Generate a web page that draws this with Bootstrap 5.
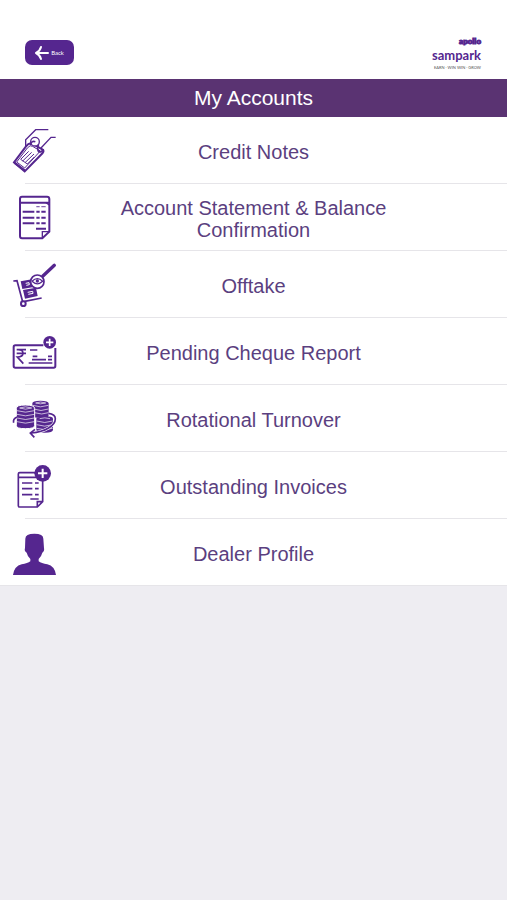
<!DOCTYPE html>
<html lang="en">
<head>
<meta charset="utf-8">
<meta name="viewport" content="width=device-width, initial-scale=1">
<title>My Accounts</title>
<link rel="stylesheet" href="https://cdn.jsdelivr.net/npm/bootstrap@5.3.0/dist/css/bootstrap.min.css">
<style>
  :root { --brand: #55268f; --bar: #5a3372; --ink: #5b3f80; }
  body { background: #eeedf2; font-family: "Liberation Sans", Arial, sans-serif; }
  .top-bar { height: 79px; padding: 32px 26px 0 25px; }
  .back-btn { width: 49px; height: 25px; border-radius: 7px; background: var(--brand); color: #fff; border: 0;
    font: 6px/25px Lato, "Liberation Sans", sans-serif; gap: 2px; }
  .brand-logo { color: var(--brand); font-family: Lato, "Liberation Sans", sans-serif; }
  .logo-top { font-size: 8px; line-height: 10px; font-weight: 900; padding-top: 4px; -webkit-text-stroke: 1px var(--brand); }
  .logo-main { font-size: 13px; line-height: 18px; font-weight: 700; }
  .logo-tag { font-size: 4px; line-height: 8px; color: #555; }
  .title-bar { background: var(--bar); font-size: 21px; line-height: 38px; }
  .menu-list { border-bottom: 1px solid #e6e5e9; }
  .menu-row { display: grid; grid-template-columns: 100px 1fr 100px; height: 66px; align-items: center;
    color: var(--ink); font-size: 20px; line-height: 22px; }
  .menu-label { padding-top: 3px; }
  .menu-item + .menu-item::before { content: ""; display: block; height: 1px; margin-left: 25px; background: #e6e5e9; }
  .menu-row svg { width: 60px; height: 66px; fill: none; stroke: var(--brand); stroke-width: 6; }
  .menu-row .solid { fill: var(--brand); }
  .menu-row .paper { fill: #fff; }
</style>
<script src="https://cdn.jsdelivr.net/npm/bootstrap@5.3.0/dist/js/bootstrap.bundle.min.js"></script>
</head>
<body>
<header>
  <div class="top-bar bg-white d-flex justify-content-between align-items-start">
    <button type="button" class="back-btn d-flex align-items-center justify-content-center p-0 mt-2">
      <svg width="14" height="16" viewBox="0 0 14 16" fill="none" stroke="#fff" stroke-width="2" stroke-linecap="round" aria-hidden="true"><path d="M13 8H1M6 2Q5 6 1 8Q5 10 6 14"/></svg>
      <span>Back</span>
    </button>
    <div class="brand-logo text-end">
      <div class="logo-top">apollo</div>
      <div class="logo-main">sampark</div>
      <div class="logo-tag">EARN · WIN WIN · GROW</div>
    </div>
  </div>
  <h1 class="title-bar text-white text-center fw-normal m-0">My Accounts</h1>
</header>
<main>
  <ul class="menu-list list-unstyled bg-white m-0">
    <li class="menu-item"><a href="#" class="menu-row text-decoration-none">
      <svg viewBox="0 3 180 198" aria-hidden="true">
        <path stroke-width="4" d="M145 41H107L77 71V94M167 64H153L123 96"/>
        <path class="paper" d="M42 139L78 91Q88 77 99 84L128 101Q133 104 128 111L74 166Z"/>
        <path stroke-width="3" d="M50 138L82 96Q91 85 98 91L121 105L74 156Z"/>
        <path stroke-width="7" d="M43 140L74 163"/>
        <path stroke-width="3" d="M62 130L86 106M68 135L95 109M75 140L102 114M82 144L103 123M62 130L82 144"/>
        <circle class="paper" cx="105" cy="77" r="13" stroke-width="4"/>
        <path stroke-width="5" d="M91 87Q94 73 106 77M116 85Q109 97 117 108Q128 108 130 99"/>
      </svg><span class="menu-label text-center">Credit Notes</span></a></li>
    <li class="menu-item"><a href="#" class="menu-row text-decoration-none">
      <svg viewBox="0 0 180 198" aria-hidden="true">
        <path d="M66 38H141Q148 38 148 45V143L127 163H66Q60 163 60 156V45Q60 38 66 38ZM60 56H148"/>
        <path d="M127 163V143H148M138 56L148 63" stroke-width="4"/>
        <path d="M68 83H103M68 101H103M68 118H103M109 83H119M124 83H137M109 101H119M124 101H137M109 118H119M124 118H137M108 134H138"/>
        <path stroke-width="4" opacity=".7" d="M109 68H119M124 68H137"/>
      </svg><span class="menu-label text-center">Account Statement &amp; Balance Confirmation</span></a></li>
    <li class="menu-item"><a href="#" class="menu-row text-decoration-none">
      <svg viewBox="0 -3 180 198" aria-hidden="true">
        <path d="M40 87L51 86L68 149M74 148L125 138" stroke-width="5"/>
        <circle class="paper" cx="70" cy="155" r="7"/>
        <path class="solid" stroke="none" d="M62 88L96 82L101 105L67 111ZM69 114L108 107L113 132L75 140Z"/>
        <path stroke="#fff" stroke-width="3" d="M77 94L87 92L88 98L79 100M83 121L98 118L99 124L85 127"/>
        <path stroke-width="10" stroke-linecap="round" d="M128 73L163 40"/>
        <circle class="paper" cx="112" cy="89" r="20" stroke-width="5"/>
        <path stroke-width="4" d="M96 88Q112 72 128 88Q112 103 96 88"/>
        <circle class="solid" cx="112" cy="87" r="5" stroke="none"/>
      </svg><span class="menu-label text-center">Offtake</span></a></li>
    <li class="menu-item"><a href="#" class="menu-row text-decoration-none">
      <svg viewBox="0 -6 180 198" aria-hidden="true">
        <path d="M130 76H46Q41 76 41 81V138Q41 143 46 143H161Q166 143 166 138V84"/>
        <path d="M50 89H78M50 100H78M52 89Q69 88 69 100Q69 111 52 111L70 131" stroke-width="5"/>
        <path stroke-width="5" d="M90 90H112M98 109H112M96 119H138M144 109H156M144 119H156M86 129H157"/>
        <circle class="solid" cx="149" cy="67" r="19" stroke="none"/>
        <path stroke="#fff" stroke-width="5" d="M138 67H160M149 56V78"/>
      </svg><span class="menu-label text-center">Pending Cheque Report</span></a></li>
    <li class="menu-item"><a href="#" class="menu-row text-decoration-none">
      <svg viewBox="0 -3 180 198" aria-hidden="true">
        <path class="solid" stroke="none" d="M97 52Q97 44 121 44T146 52V88Q146 96 121 96T97 88ZM109 98Q109 91 134 91T159 98V131Q159 140 134 140T109 131Z"/>
        <path class="solid" stroke="#fff" stroke-width="3" d="M49 67Q49 57 76 57T104 67V119Q104 128 76 128T49 119Z"/>
        <path stroke="#fff" stroke-width="2" d="M51 74Q76 83 103 74M51 85Q76 94 103 85M51 96Q76 105 103 96M51 107Q76 116 103 107M98 58Q121 67 145 58M101 69Q123 78 145 69M103 80Q126 88 145 80M110 105Q134 114 158 105M110 116Q134 125 158 116M110 127Q134 135 158 127"/>
        <path stroke="#fff" stroke-width="2" d="M59 66Q76 59 95 66Q76 73 59 66M107 51Q121 45 137 51Q121 56 107 51M119 98Q134 93 150 98"/>
        <path stroke="#fff" stroke-width="9" d="M146 82Q166 84 166 98C166 119 136 137 94 141"/>
        <path stroke-width="5" d="M51 93Q38 99 41 110M145 82Q166 84 166 98C166 119 136 137 94 141M105 130L91 141L103 154"/>
      </svg><span class="menu-label text-center">Rotational Turnover</span></a></li>
    <li class="menu-item"><a href="#" class="menu-row text-decoration-none">
      <svg viewBox="0 -3 180 198" aria-hidden="true">
        <path stroke-width="5" d="M106 59H59Q55 59 55 63V158Q55 162 59 162H112L128 146V84M55 73H108M112 162V146H128"/>
        <path stroke-width="5" d="M66 90H97M105 90H116M66 107H97M105 107H116M66 125H97M105 125H116M91 138H116"/>
        <circle class="solid" cx="128" cy="61" r="25" stroke="none"/>
        <path stroke="#fff" d="M114 61H142M128 47V75"/>
      </svg><span class="menu-label text-center">Outstanding Invoices</span></a></li>
    <li class="menu-item"><a href="#" class="menu-row text-decoration-none">
      <svg viewBox="0 -3 180 198" aria-hidden="true">
        <path class="solid" stroke="none" d="M75 84L76 56Q76 41 103 41T130 56L132 84Q134 94 127 98Q124 110 116 117V124Q124 130 142 133Q164 138 168 165H39Q43 138 65 133Q83 130 91 124V117Q83 110 80 98Q72 94 75 84Z"/>
      </svg><span class="menu-label text-center">Dealer Profile</span></a></li>
  </ul>
</main>
</body>
</html>
